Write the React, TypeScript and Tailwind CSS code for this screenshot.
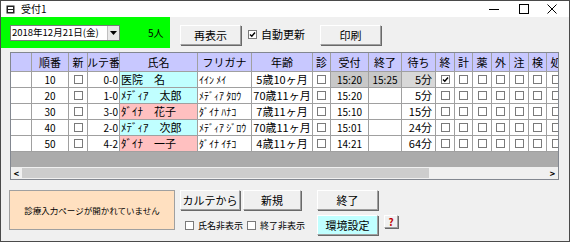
import React from "react";

// 受付一覧画面
interface Patient {
  no: number;
  karte: string;
  name: string;
  kana: string;
  age: string;
  uketsuke: string;
  shuryo: string;
  machi: string;
  color: "cyan" | "pink";
  selected?: boolean;
}

const patients: Patient[] = [
  { no: 10, karte: "0-0", name: "医院　名", kana: "ｲｲﾝ ﾒｲ", age: "5歳10ヶ月", uketsuke: "15:20", shuryo: "15:25", machi: "5分", color: "cyan", selected: true },
  { no: 20, karte: "1-0", name: "ﾒﾃﾞｨｱ　太郎", kana: "ﾒﾃﾞｨｱ ﾀﾛｳ", age: "70歳11ヶ月", uketsuke: "15:20", shuryo: "", machi: "5分", color: "cyan" },
  { no: 30, karte: "3-0", name: "ﾀﾞｲﾅ　花子", kana: "ﾀﾞｲﾅ ﾊﾅｺ", age: "7歳11ヶ月", uketsuke: "15:10", shuryo: "", machi: "15分", color: "pink" },
  { no: 40, karte: "2-0", name: "ﾒﾃﾞｨｱ　次郎", kana: "ﾒﾃﾞｨｱ ｼﾞﾛｳ", age: "70歳11ヶ月", uketsuke: "15:01", shuryo: "", machi: "24分", color: "cyan" },
  { no: 50, karte: "4-2", name: "ﾀﾞｲﾅ　一子", kana: "ﾀﾞｲﾅ ｲﾁｺ", age: "4歳11ヶ月", uketsuke: "14:21", shuryo: "", machi: "64分", color: "pink" },
];

const flagHeaders = ["終", "計", "薬", "外", "注", "検", "処"];

const Check = ({ checked = false }: { checked?: boolean }) => (
  <div className="w-[9px] h-[9px] shrink-0 border border-[#7a7a7a] bg-white flex items-center justify-center">
    {checked && (
      <svg width="7" height="7" viewBox="0 0 7 7">
        <path d="M1 3.5 L2.8 5.3 L6 1.5" stroke="#000" strokeWidth="1.4" fill="none" />
      </svg>
    )}
  </div>
);

const Button = ({ label, className = "" }: { label: string; className?: string }) => (
  <div
    className={`h-[20px] flex items-center justify-center text-[11px] border border-t-white border-l-white border-r-[#a0a0a0] border-b-[#a0a0a0] shadow-[1px_1px_0_#696969] ${className}`}
  >
    {label}
  </div>
);

const Cell = ({
  w,
  children,
  className = "",
}: {
  w: string;
  children?: React.ReactNode;
  className?: string;
}) => (
  <div className={`${w} shrink-0 h-full border-r border-[#a0a0a0] flex items-center overflow-hidden whitespace-nowrap ${className}`}>
    {children}
  </div>
);

export default function App() {
  return (
    <div
      className="w-[570px] h-[242px] bg-[#f0f0f0] border border-[#4a4a4a] flex flex-col overflow-hidden text-black leading-none"
      style={{ fontFamily: "'Noto Sans CJK JP', 'Noto Sans', sans-serif" }}
    >
      {/* title bar */}
      <div className="h-[16px] bg-white flex items-center shrink-0">
        <svg className="ml-[5px]" width="9" height="9" viewBox="0 0 9 9">
          <rect x="0.5" y="0.5" width="8" height="8" fill="#222" />
          <rect x="2" y="2" width="5" height="2" fill="#fff" />
          <rect x="2" y="5" width="5" height="2" fill="#fff" />
        </svg>
        <span className="ml-[6px] text-[10px]">受付1</span>
        <div className="ml-auto flex items-center h-full">
          <svg className="mr-[20px]" width="10" height="10" viewBox="0 0 10 10">
            <path d="M0 5.5 H10" stroke="#000" strokeWidth="1" />
          </svg>
          <svg className="mr-[18px]" width="10" height="10" viewBox="0 0 10 10">
            <rect x="0.5" y="0.5" width="9" height="9" stroke="#000" fill="none" />
          </svg>
          <svg className="mr-[12px]" width="10" height="10" viewBox="0 0 10 10">
            <path d="M0.5 0.5 L9.5 9.5 M9.5 0.5 L0.5 9.5" stroke="#000" strokeWidth="1" />
          </svg>
        </div>
      </div>

      {/* toolbar */}
      <div className="h-[31px] flex shrink-0">
        <div className="w-[169px] h-full bg-[#00ff00] flex items-center pl-[9px]">
          <div className="w-[110px] h-[16px] bg-white border border-[#7a7a7a] flex items-center">
            <span className="flex-1 text-[9.5px] pl-[1px] pt-[1px] whitespace-nowrap">2018年12月21日(金)</span>
            <div className="w-[12px] h-[14px] bg-[#e8e8e8] border-l border-[#c0c0c0] flex items-center justify-center">
              <svg width="7" height="4" viewBox="0 0 7 4">
                <path d="M0 0 H7 L3.5 4 Z" fill="#000" />
              </svg>
            </div>
          </div>
          <span className="ml-[28px] text-[10px]">5人</span>
        </div>
        <Button label="再表示" className="w-[61px] mt-[8px] ml-[10px]" />
        <div className="flex items-center ml-[7px] mt-[4px]">
          <Check checked />
          <span className="ml-[4px] text-[11px] whitespace-nowrap">自動更新</span>
        </div>
        <Button label="印刷" className="w-[61px] mt-[8px] ml-[15px]" />
      </div>

      {/* grid */}
      <div className="ml-[9px] mt-[4px] w-[549px] h-[128px] border border-[#828790] flex flex-col shrink-0 overflow-hidden">
        <div className="flex-1 bg-[#ababab] overflow-hidden">
          <div className="h-[19px] flex border-b border-[#a0a0a0] bg-[#c8c8ff] text-[11px]">
            <Cell w="w-[21px]" />
            <Cell w="w-[37px]" className="justify-center">順番</Cell>
            <Cell w="w-[19px]" className="justify-center">新</Cell>
            <Cell w="w-[32px]" className="justify-center">ルテ番</Cell>
            <Cell w="w-[78px]" className="justify-center">氏名</Cell>
            <Cell w="w-[54px]" className="justify-center">フリガナ</Cell>
            <Cell w="w-[61px]" className="justify-center">年齢</Cell>
            <Cell w="w-[18px]" className="justify-center">診</Cell>
            <Cell w="w-[38px]" className="justify-center">受付</Cell>
            <Cell w="w-[33px]" className="justify-center">終了</Cell>
            <Cell w="w-[34px]" className="justify-center">待ち</Cell>
            {flagHeaders.map((h, i) => (
              <Cell key={h} w={i % 2 === 0 ? "w-[19px]" : "w-[18px]"} className="justify-center">
                {h}
              </Cell>
            ))}
          </div>
          {patients.map((p) => (
            <div key={p.no} className="h-[16px] flex border-b border-[#a0a0a0] bg-white text-[10px]">
              <Cell w="w-[21px]" />
              <Cell w="w-[37px]" className="justify-center">{p.no}</Cell>
              <Cell w="w-[19px]" className="justify-center"><Check /></Cell>
              <Cell w="w-[32px]" className="justify-end pr-[1px]">{p.karte}</Cell>
              <Cell
                w="w-[78px]"
                className={`pl-[1px] text-[11px] ${p.color === "cyan" ? "bg-[#c0ffff]" : "bg-[#ffc0c0]"}`}
              >
                {p.name}
              </Cell>
              <Cell w="w-[54px]" className="pl-[1px]">{p.kana}</Cell>
              <Cell w="w-[61px]" className="justify-center text-[11px]">{p.age}</Cell>
              <Cell w="w-[18px]" className="justify-center"><Check /></Cell>
              <Cell w="w-[38px]" className={`justify-center ${p.selected ? "bg-[#c8c8c8]" : ""}`}>{p.uketsuke}</Cell>
              <Cell w="w-[33px]" className={`justify-center ${p.selected ? "bg-[#c8c8c8]" : ""}`}>{p.shuryo}</Cell>
              <Cell w="w-[34px]" className={`justify-end pr-[3px] text-[11px] ${p.selected ? "bg-[#d8d8d8]" : ""}`}>{p.machi}</Cell>
              {flagHeaders.map((h, i) => (
                <Cell key={h} w={i % 2 === 0 ? "w-[19px]" : "w-[18px]"} className="justify-center">
                  <Check checked={p.selected && i === 0} />
                </Cell>
              ))}
            </div>
          ))}
        </div>
        {/* horizontal scrollbar */}
        <div className="h-[12px] bg-[#f0f0f0] flex items-center shrink-0">
          <span className="w-[11px] text-center text-[9px] font-bold">&lt;</span>
          <div className="w-[407px] h-[10px] bg-[#cdcdcd]" />
          <span className="ml-auto w-[11px] text-center text-[9px] font-bold">&gt;</span>
        </div>
      </div>

      {/* bottom */}
      <div className="flex mt-[10px] ml-[8px]">
        <div className="w-[166px] h-[40px] bg-[#ffe0c0] border border-[#a0a0a0] flex items-center justify-center text-[8.5px] whitespace-nowrap">
          診療入力ページが開かれていません
        </div>
        <div className="flex flex-col ml-[5px]">
          <div className="flex">
            <Button label="カルテから" className="w-[60px]" />
            <Button label="新規" className="w-[58px] ml-[3px]" />
            <Button label="終了" className="w-[61px] ml-[16px]" />
          </div>
          <div className="flex mt-[5px]">
            <div className="flex items-center ml-[5px] w-[62px]">
              <Check />
              <span className="ml-[4px] text-[9px] whitespace-nowrap">氏名非表示</span>
            </div>
            <div className="flex items-center w-[70px]">
              <Check />
              <span className="ml-[4px] text-[9px] whitespace-nowrap">終了非表示</span>
            </div>
            <Button label="環境設定" className="w-[61px] h-[19px] bg-[#c0ffff]" />
            <div className="w-[14px] h-[13px] ml-[6px] flex items-center justify-center text-[10px] font-bold text-[#c00000] border border-t-white border-l-white border-r-[#a0a0a0] border-b-[#a0a0a0] shadow-[1px_1px_0_#696969]">
              ?
            </div>
          </div>
        </div>
      </div>
    </div>
  );
}
